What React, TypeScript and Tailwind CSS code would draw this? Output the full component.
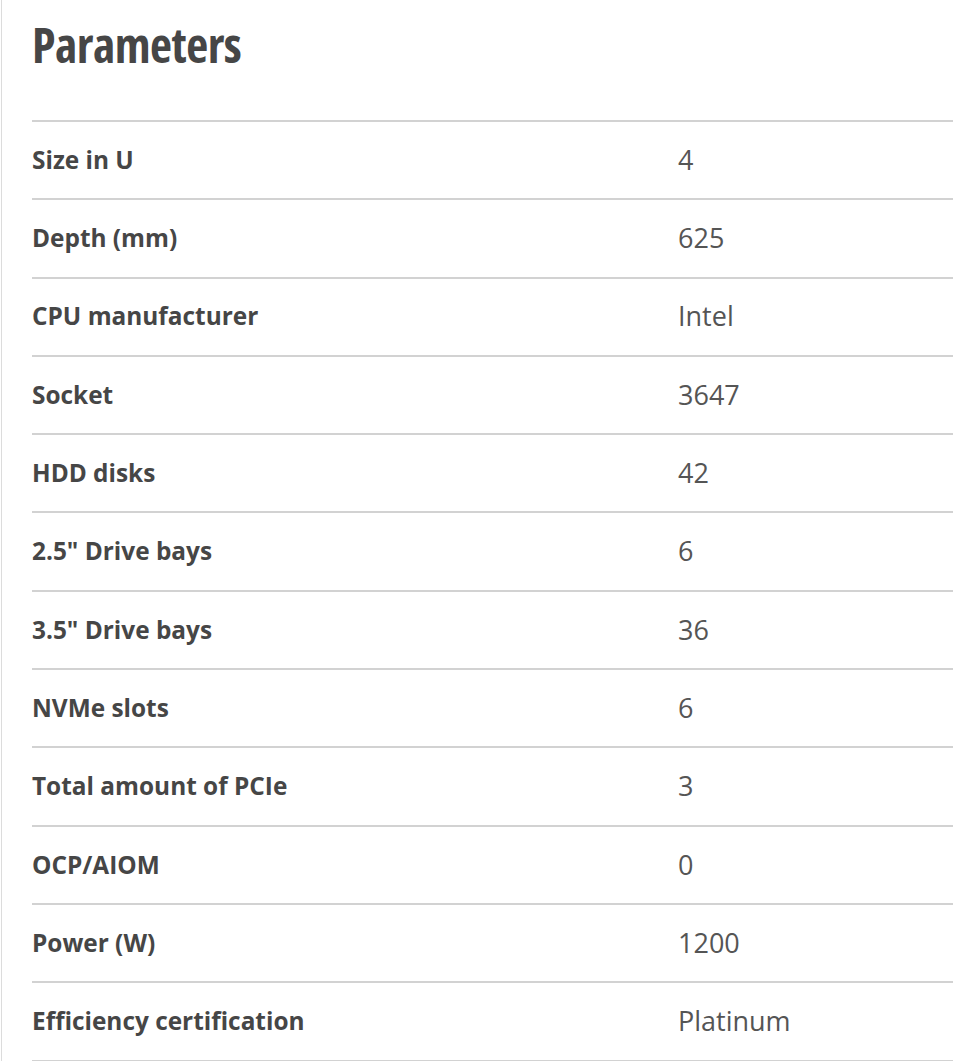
const params: { label: string; value: string }[] = [
  { label: "Size in U", value: "4" },
  { label: "Depth (mm)", value: "625" },
  { label: "CPU manufacturer", value: "Intel" },
  { label: "Socket", value: "3647" },
  { label: "HDD disks", value: "42" },
  { label: '2.5" Drive bays', value: "6" },
  { label: '3.5" Drive bays', value: "36" },
  { label: "NVMe slots", value: "6" },
  { label: "Total amount of PCIe", value: "3" },
  { label: "OCP/AIOM", value: "0" },
  { label: "Power (W)", value: "1200" },
  { label: "Efficiency certification", value: "Platinum" },
];

export default function App() {
  return (
    <div className="min-h-[1061px] bg-white font-['Open_Sans',sans-serif]">
      <div className="ml-[1px] border-l border-[#dcdcdc] pl-[30px] min-h-[1061px]">
        {/* Titel */}
        <h2 className="pt-[12px] pb-[42px] text-[48px] leading-[66px] font-bold font-stretch-condensed text-[#464646] tracking-[-0.5px]">
          Parameters
        </h2>

        <div className="border-t-2 border-[#d2d2d2]">
          {params.map((item, index) => (
            <div
              key={index}
              className="flex items-center h-[78.3px] border-b-2 border-[#d2d2d2]"
            >
              <div className="w-[646px] shrink-0 text-[24.4px] font-bold text-[#464646]">
                {item.label}
              </div>
              <div className="text-[27px] text-[#555555] font-stretch-[95%]">
                {item.value}
              </div>
            </div>
          ))}
        </div>
      </div>
    </div>
  );
}
